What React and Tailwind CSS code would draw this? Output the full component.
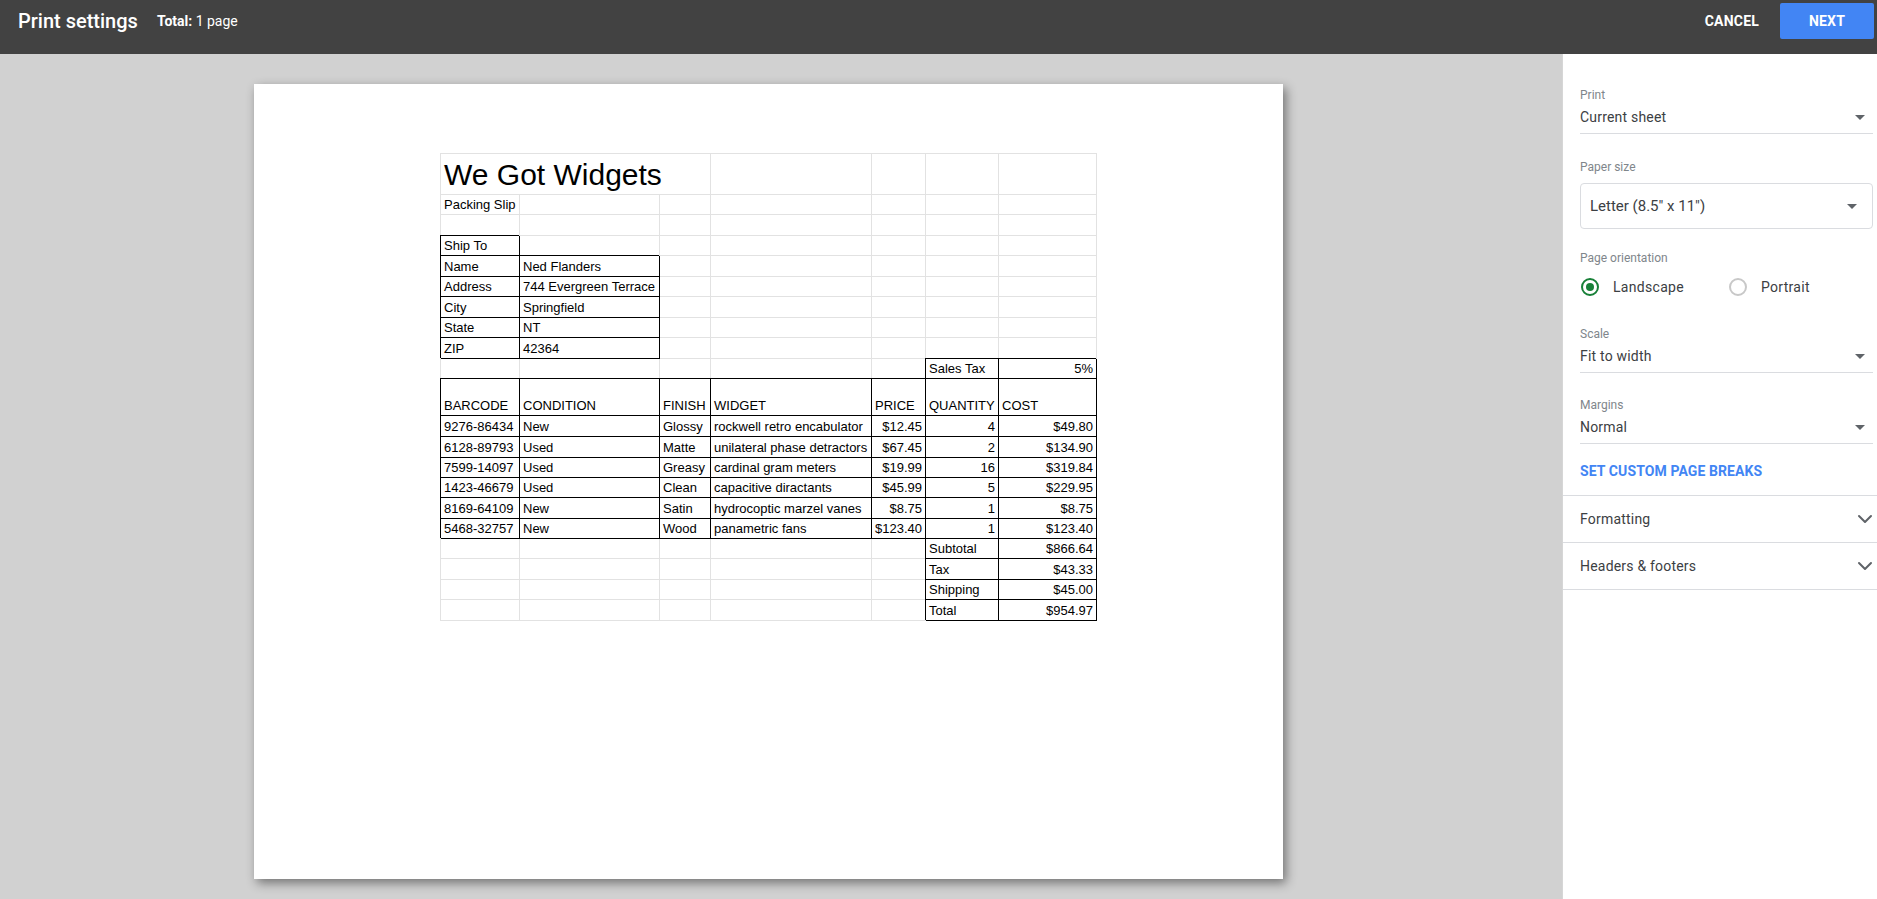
import React from 'react';
import { ChevronDown } from 'lucide-react';

const cols = '79px 140px 51px 161px 54px 73px 98px';
const rowHeights = [41, 20, 21, 20, 21, 20, 21, 20, 21, 20, 37, 21, 21, 20, 20, 21, 20, 20, 21, 20, 21];

const E = {};
const blank = (n) => Array.from({ length: n }, () => E);
const b = (t, r) => ({ t, b: true, r });

const items = [
  ['9276-86434', 'New', 'Glossy', 'rockwell retro encabulator', '$12.45', '4', '$49.80'],
  ['6128-89793', 'Used', 'Matte', 'unilateral phase detractors', '$67.45', '2', '$134.90'],
  ['7599-14097', 'Used', 'Greasy', 'cardinal gram meters', '$19.99', '16', '$319.84'],
  ['1423-46679', 'Used', 'Clean', 'capacitive diractants', '$45.99', '5', '$229.95'],
  ['8169-64109', 'New', 'Satin', 'hydrocoptic marzel vanes', '$8.75', '1', '$8.75'],
  ['5468-32757', 'New', 'Wood', 'panametric fans', '$123.40', '1', '$123.40'],
];

const shipTo = [
  ['Name', 'Ned Flanders'],
  ['Address', '744 Evergreen Terrace'],
  ['City', 'Springfield'],
  ['State', 'NT'],
  ['ZIP', '42364'],
];

const rows = [
  [{ t: 'We Got Widgets', span: 3, big: true }, ...blank(4)],
  [{ t: 'Packing Slip' }, ...blank(6)],
  blank(7),
  [b('Ship To'), ...blank(6)],
  ...shipTo.map(([k, v]) => [b(k), b(v), ...blank(5)]),
  [...blank(5), b('Sales Tax'), b('5%', true)],
  ['BARCODE', 'CONDITION', 'FINISH', 'WIDGET', 'PRICE', 'QUANTITY', 'COST'].map((h) => b(h)),
  ...items.map((it) => it.map((v, i) => b(v, i >= 4))),
  [...blank(5), b('Subtotal'), b('$866.64', true)],
  [...blank(5), b('Tax'), b('$43.33', true)],
  [...blank(5), b('Shipping'), b('$45.00', true)],
  [...blank(5), b('Total'), b('$954.97', true)],
];

function Cell({ cell }) {
  const cls = [
    'flex items-end px-[3px] border-r border-b whitespace-nowrap overflow-visible',
    cell.b ? 'border-black shadow-[-1px_-1px_0_0_#000]' : 'border-[#e2e2e2]',
    cell.r ? 'justify-end' : 'justify-start',
    cell.big ? 'text-[30px] leading-[34px] col-span-3 pb-[2px]' : 'text-[13px] leading-[15px] pb-[2px]',
  ].join(' ');
  return <div className={cls}>{cell.t || ''}</div>;
}

function Sheet() {
  return (
    <div
      className="grid border-t border-l border-[#e2e2e2] text-black font-['Liberation_Sans',Arial,sans-serif] w-max"
      style={{ gridTemplateColumns: cols, gridTemplateRows: rowHeights.map((h) => h + 'px').join(' ') }}
    >
      {rows.map((row, ri) => row.map((cell, ci) => <Cell key={ri + '-' + ci} cell={cell} />))}
    </div>
  );
}

function Caret() {
  return <span className="w-0 h-0 border-x-[5px] border-x-transparent border-t-[5px] border-t-[#5f6368]" />;
}

function Label({ children, className = '' }) {
  return <div className={'text-[12px] leading-4 text-[#80868b] ' + className}>{children}</div>;
}

function Select({ value }) {
  return (
    <div className="mt-[4px] pb-[6px] flex items-center justify-between border-b border-[#dadce0] text-[14px] leading-5 text-[#3c4043] tracking-[0.2px] pr-[8px]">
      <span>{value}</span>
      <Caret />
    </div>
  );
}

function Radio({ checked, label, className = '' }) {
  return (
    <div className={'flex items-center ' + className}>
      {checked ? (
        <span className="w-[18px] h-[18px] rounded-full border-2 border-[#188038] flex items-center justify-center">
          <span className="w-[8px] h-[8px] rounded-full bg-[#188038]" />
        </span>
      ) : (
        <span className="w-[18px] h-[18px] rounded-full border-2 border-[#c8c8c8]" />
      )}
      <span className="ml-[14px] text-[14px] text-[#3c4043] tracking-[0.3px]">{label}</span>
    </div>
  );
}

export default function App() {
  return (
    <div className="w-[1877px] h-[899px] overflow-hidden flex flex-col font-['Roboto','Liberation_Sans',sans-serif]">
      <header className="h-[54px] bg-[#424242] pl-[18px] pr-[3px] pt-[3px] shrink-0">
        <div className="h-[36px] flex items-center text-white">
          <span className="text-[20px] font-medium">Print settings</span>
          <span className="ml-[19px] text-[14px]">
            <span className="font-bold">Total:</span> 1 page
          </span>
          <div className="flex-1" />
          <button className="text-[14px] font-bold tracking-[0.2px]">CANCEL</button>
          <button className="ml-[21px] w-[94px] h-[36px] bg-[#4285f4] rounded-[2px] text-[14px] font-bold tracking-[0.2px]">
            NEXT
          </button>
        </div>
      </header>

      <div className="flex flex-1 min-h-0">
        <main className="w-[1562px] bg-[#d1d1d1] pl-[254px] pt-[30px]">
          <div className="w-[1029px] h-[795px] bg-white shadow-[3px_4px_10px_rgba(0,0,0,0.45)] pl-[186px] pt-[69px]">
            <Sheet />
          </div>
        </main>

        <aside className="w-[315px] bg-white border-l border-[#d6d6d6]">
          <div className="pl-[17px] pr-[4px] pt-[33px] pb-[16px] border-b border-[#dadce0]">
            <Label>Print</Label>
            <Select value="Current sheet" />

            <Label className="mt-[25px]">Paper size</Label>
            <div className="mt-[8px] h-[46px] border border-[#dadce0] rounded-[4px] flex items-center justify-between pl-[9px] pr-[15px] text-[15px] text-[#3c4043]">
              <span>Letter (8.5" x 11")</span>
              <Caret />
            </div>

            <Label className="mt-[21px]">Page orientation</Label>
            <div className="mt-[9px] h-[24px] flex items-center pl-[1px]">
              <Radio checked label="Landscape" className="w-[148px]" />
              <Radio label="Portrait" />
            </div>

            <Label className="mt-[27px]">Scale</Label>
            <Select value="Fit to width" />

            <Label className="mt-[24px]">Margins</Label>
            <Select value="Normal" />

            <div className="mt-[19px] text-[14px] leading-4 font-bold text-[#4285f4] tracking-[0.1px]">
              SET CUSTOM PAGE BREAKS
            </div>
          </div>
          {['Formatting', 'Headers & footers'].map((s) => (
            <div key={s} className="h-[47px] border-b border-[#dadce0] flex items-center justify-between pl-[17px] text-[14px] text-[#3c4043] tracking-[0.2px]">
              <span>{s}</span>
              <ChevronDown size={24} strokeWidth={2} color="#5f6368" />
            </div>
          ))}
        </aside>
      </div>
    </div>
  );
}
